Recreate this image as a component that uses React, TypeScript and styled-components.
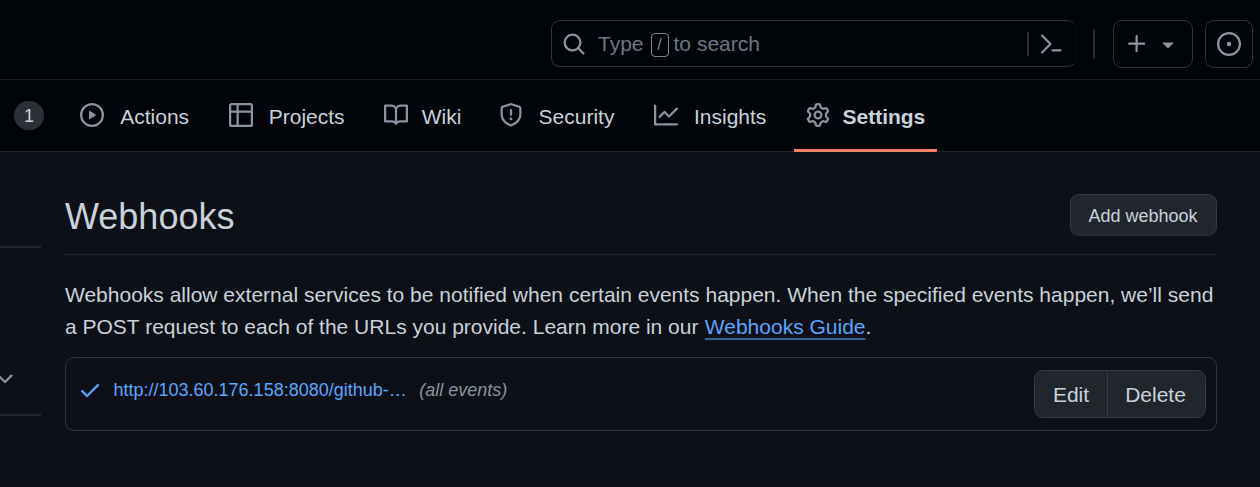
import React from "react";
import styled, { createGlobalStyle } from "styled-components";

const GlobalStyle = createGlobalStyle`
  * { box-sizing: border-box; }
  body {
    margin: 0;
    background: #0d1117;
    color: #c9d1d9;
    font-family: "Liberation Sans", Arial, sans-serif;
    font-size: 21px;
    line-height: 1.5;
    overflow: hidden;
  }
`;

const icons = {
  search:
    "M10.68 11.74a6 6 0 0 1-7.922-8.982 6 6 0 0 1 8.982 7.922l3.04 3.04a.749.749 0 0 1-.326 1.275.749.749 0 0 1-.734-.215ZM11.5 7a4.499 4.499 0 1 0-8.997 0A4.499 4.499 0 0 0 11.5 7Z",
  plus: "M7.75 2a.75.75 0 0 1 .75.75V7h4.25a.75.75 0 0 1 0 1.5H8.5v4.25a.75.75 0 0 1-1.5 0V8.5H2.75a.75.75 0 0 1 0-1.5H7V2.75A.75.75 0 0 1 7.75 2Z",
  caret:
    "m4.427 7.427 3.396 3.396a.25.25 0 0 0 .354 0l3.396-3.396A.25.25 0 0 0 11.396 7H4.604a.25.25 0 0 0-.177.427Z",
  issue:
    "M8 9.5a1.5 1.5 0 1 0 0-3 1.5 1.5 0 0 0 0 3ZM8 0a8 8 0 1 1 0 16A8 8 0 0 1 8 0ZM1.5 8a6.5 6.5 0 1 0 13 0 6.5 6.5 0 0 0-13 0Z",
  play: "M8 0a8 8 0 1 1 0 16A8 8 0 0 1 8 0ZM1.5 8a6.5 6.5 0 1 0 13 0 6.5 6.5 0 0 0-13 0Zm4.879-2.773 4.264 2.559a.25.25 0 0 1 0 .428l-4.264 2.559A.25.25 0 0 1 6 10.559V5.442a.25.25 0 0 1 .379-.215Z",
  table:
    "M0 1.75C0 .784.784 0 1.75 0h12.5C15.216 0 16 .784 16 1.75v12.5A1.75 1.75 0 0 1 14.25 16H1.75A1.75 1.75 0 0 1 0 14.25ZM6.5 6.5v8h7.75a.25.25 0 0 0 .25-.25V6.5Zm8-1.5V1.75a.25.25 0 0 0-.25-.25H6.5V5Zm-13 1.5v7.75c0 .138.112.25.25.25H5v-8ZM5 5V1.5H1.75a.25.25 0 0 0-.25.25V5Z",
  book: "M0 1.75A.75.75 0 0 1 .75 1h4.253c1.227 0 2.317.59 3 1.501A3.743 3.743 0 0 1 11.006 1h4.245a.75.75 0 0 1 .75.75v10.5a.75.75 0 0 1-.75.75h-4.507a2.25 2.25 0 0 0-1.591.659l-.622.621a.75.75 0 0 1-1.06 0l-.622-.621A2.25 2.25 0 0 0 5.258 13H.75a.75.75 0 0 1-.75-.75Zm7.251 10.324.004-5.073-.002-2.253A2.25 2.25 0 0 0 5.003 2.5H1.5v9h3.757a3.75 3.75 0 0 1 1.994.574ZM8.755 4.75l-.004 7.322a3.752 3.752 0 0 1 1.992-.572H14.5v-9h-3.495a2.25 2.25 0 0 0-2.25 2.25Z",
  shield:
    "M7.467.133a1.748 1.748 0 0 1 1.066 0l5.25 1.68A1.75 1.75 0 0 1 15 3.48V7c0 1.566-.32 3.182-1.303 4.682-.983 1.498-2.585 2.813-5.032 3.855a1.697 1.697 0 0 1-1.33 0c-2.447-1.042-4.049-2.357-5.032-3.855C1.32 10.182 1 8.566 1 7V3.48a1.75 1.75 0 0 1 1.217-1.667Zm.61 1.429a.25.25 0 0 0-.153 0l-5.25 1.68a.25.25 0 0 0-.174.238V7c0 1.358.275 2.666 1.057 3.86.784 1.194 2.121 2.34 4.366 3.297a.196.196 0 0 0 .154 0c2.245-.956 3.582-2.104 4.366-3.298C13.225 9.666 13.5 8.36 13.5 7V3.48a.251.251 0 0 0-.174-.237l-5.25-1.68ZM8.75 4.75v3a.75.75 0 0 1-1.5 0v-3a.75.75 0 0 1 1.5 0ZM9 10.5a1 1 0 1 1-2 0 1 1 0 0 1 2 0Z",
  graph:
    "M1.5 1.75V13.5h13.75a.75.75 0 0 1 0 1.5H.75a.75.75 0 0 1-.75-.75V1.75a.75.75 0 0 1 1.5 0Zm14.28 2.53-5.25 5.25a.75.75 0 0 1-1.06 0L7 7.06 4.28 9.78a.751.751 0 0 1-1.042-.018.751.751 0 0 1-.018-1.042l3.25-3.25a.75.75 0 0 1 1.06 0L10 7.94l4.72-4.72a.751.751 0 0 1 1.042.018.751.751 0 0 1 .018 1.042Z",
  gear: "M8 0a8.2 8.2 0 0 1 .701.031C9.444.095 9.99.645 10.16 1.29l.288 1.107c.018.066.079.158.212.224.231.114.454.243.668.386.123.082.233.09.299.071l1.103-.303c.644-.176 1.392.021 1.82.63.27.385.506.792.704 1.218.315.675.111 1.422-.364 1.891l-.814.806c-.049.048-.098.147-.088.294.016.257.016.515 0 .772-.01.147.038.246.088.294l.814.806c.475.469.679 1.216.364 1.891a7.977 7.977 0 0 1-.704 1.217c-.428.61-1.176.807-1.82.63l-1.102-.302c-.067-.019-.177-.011-.3.071a5.909 5.909 0 0 1-.668.386c-.133.066-.194.158-.211.224l-.29 1.106c-.168.646-.715 1.196-1.458 1.26a8.006 8.006 0 0 1-1.402 0c-.743-.064-1.289-.614-1.458-1.26l-.289-1.106c-.018-.066-.079-.158-.212-.224a5.738 5.738 0 0 1-.668-.386c-.123-.082-.233-.09-.299-.071l-1.103.303c-.644.176-1.392-.021-1.82-.63a8.12 8.12 0 0 1-.704-1.218c-.315-.675-.111-1.422.363-1.891l.815-.806c.05-.048.098-.147.088-.294a6.214 6.214 0 0 1 0-.772c.01-.147-.038-.246-.088-.294l-.815-.806C.635 6.045.431 5.298.746 4.623a7.92 7.92 0 0 1 .704-1.217c.428-.61 1.176-.807 1.82-.63l1.102.302c.067.019.177.011.3-.071.214-.143.437-.272.668-.386.133-.066.194-.158.211-.224l.29-1.106C6.009.645 6.556.095 7.299.03 7.53.01 7.764 0 8 0Zm-.571 1.525c-.036.003-.108.036-.137.146l-.289 1.105c-.147.561-.549.967-.998 1.189-.173.086-.34.183-.5.29-.417.278-.97.423-1.529.27l-1.103-.303c-.109-.03-.175.016-.195.045-.22.312-.412.644-.573.99-.014.031-.021.11.059.19l.815.806c.411.406.562.957.53 1.456a4.709 4.709 0 0 0 0 .582c.032.499-.119 1.05-.53 1.456l-.815.806c-.081.08-.073.159-.059.19.162.346.353.677.573.989.02.03.085.076.195.046l1.102-.303c.56-.153 1.113-.008 1.53.27.161.107.328.204.501.29.447.222.85.629.997 1.189l.289 1.105c.029.109.101.143.137.146a6.6 6.6 0 0 0 1.142 0c.036-.003.108-.036.137-.146l.289-1.105c.147-.561.549-.967.998-1.189.173-.086.34-.183.5-.29.417-.278.97-.423 1.529-.27l1.103.303c.109.029.175-.016.195-.045.22-.313.411-.644.573-.99.014-.031.021-.11-.059-.19l-.815-.806c-.411-.406-.562-.957-.53-1.456a4.709 4.709 0 0 0 0-.582c-.032-.499.119-1.05.53-1.456l.815-.806c.081-.08.073-.159.059-.19a6.464 6.464 0 0 0-.573-.989c-.02-.03-.085-.076-.195-.046l-1.102.303c-.56.153-1.113.008-1.53-.27a4.44 4.44 0 0 0-.501-.29c-.447-.222-.85-.629-.997-1.189l-.289-1.105c-.029-.11-.101-.143-.137-.146a6.6 6.6 0 0 0-1.142 0ZM11 8a3 3 0 1 1-6 0 3 3 0 0 1 6 0ZM9.5 8a1.5 1.5 0 1 0-3.001.001A1.5 1.5 0 0 0 9.5 8Z",
  check:
    "M13.78 4.22a.75.75 0 0 1 0 1.06l-7.25 7.25a.75.75 0 0 1-1.06 0L2.22 9.28a.751.751 0 0 1 .018-1.042.751.751 0 0 1 1.042-.018L6 10.94l6.72-6.72a.75.75 0 0 1 1.06 0Z",
  chevron:
    "M12.78 5.22a.749.749 0 0 1 0 1.06l-4.25 4.25a.749.749 0 0 1-1.06 0L3.22 6.28a.749.749 0 1 1 1.06-1.06L8 8.939l3.72-3.719a.749.749 0 0 1 1.06 0Z",
};

type IconName = keyof typeof icons;

const IconSvg = styled.svg`
  display: block;
  flex: none;
  fill: currentColor;
`;

const Icon = ({ name, size = 24 }: { name: IconName; size?: number }) => (
  <IconSvg width={size} height={size} viewBox="0 0 16 16" aria-hidden="true">
    <path d={icons[name]} />
  </IconSvg>
);

const Page = styled.div`
  width: 1260px;
  height: 487px;
  overflow: hidden;
`;

const TopBar = styled.header`
  display: flex;
  justify-content: flex-end;
  align-items: flex-start;
  height: 80px;
  padding: 20px 7px 0 0;
  background: #010409;
  border-bottom: 1px solid #161b22;
  color: #8b949e;
`;

const SearchBox = styled.div`
  display: flex;
  align-items: center;
  width: 525px;
  height: 47px;
  padding: 0 13px 0 10px;
  border: 1px solid #30363d;
  border-right-color: #0c1016;
  border-radius: 9px;
`;

const SearchText = styled.div`
  display: flex;
  align-items: center;
  flex: 1;
  margin-left: 12px;
  color: #6e7681;
`;

const SlashKey = styled.span`
  width: 18px;
  height: 24px;
  margin: 3px 5px 0 7px;
  border: 1px solid #7d8590;
  border-radius: 4px;
  font-size: 16px;
  line-height: 21px;
  text-align: center;
  color: #7d8590;
`;

const Divider = styled.span<{ $height: number }>`
  flex: none;
  width: 2px;
  height: ${(p) => p.$height}px;
  background: #282d34;
`;

const TopDivider = styled(Divider)`
  margin: 9px 18px 0 17px;
`;

const PromptSvg = styled.svg`
  margin-left: 11px;
  fill: none;
  stroke: currentColor;
  stroke-width: 2.2;
  stroke-linecap: round;
  stroke-linejoin: round;
`;

const TopButton = styled.button<{ $width: number }>`
  display: flex;
  align-items: center;
  justify-content: center;
  gap: 7px;
  width: ${(p) => p.$width}px;
  height: 48px;
  margin: 0 0 0 ${(p) => (p.$width < 60 ? 12 : 0)}px;
  padding: 0 1px 1px 0;
  color: inherit;
  background: transparent;
  border: 1px solid #30363d;
  border-radius: 9px;
`;

const Tabs = styled.nav`
  display: flex;
  gap: 12px;
  height: 72px;
  padding-left: 14px;
  background: #010409;
  border-bottom: 1px solid #21262d;
`;

const Counter = styled.span`
  width: 30px;
  height: 29px;
  margin: 21px 12.2px 0 0;
  border-radius: 15px;
  background: #2b3037;
  font-size: 18px;
  line-height: 31px;
  text-align: center;
`;

const Tab = styled.a<{ $active?: boolean }>`
  display: flex;
  align-items: center;
  gap: 12px;
  height: 72px;
  padding: 1px 12px 0;
  border-bottom: 3px solid ${(p) => (p.$active ? "#f78166" : "transparent")};
  border-radius: 1px;
  color: #8b949e;
`;

/* The bold copy reserves the width a tab takes when selected. */
const TabLabel = styled.span<{ $active?: boolean }>`
  margin-top: 3px;
  text-align: center;
  color: #c9d1d9;
  font-weight: ${(p) => (p.$active ? 700 : 400)};

  &::before {
    content: attr(data-label);
    display: block;
    height: 0;
    visibility: hidden;
    font-weight: 700;
  }
`;

const Body = styled.div`
  display: flex;
  gap: 24px;
`;

const Sidebar = styled.aside`
  display: flex;
  flex-direction: column;
  width: 41px;
  padding-top: 94px;
  color: #8b949e;
`;

const SideSection = styled.div`
  display: flex;
  align-items: flex-end;
  height: 170px;
  padding-bottom: 23px;
  border-top: 2px solid #21262d;
  border-bottom: 2px solid #21262d;

  svg {
    margin-left: -7px;
  }
`;

const Main = styled.main`
  width: 1152px;
`;

const Subhead = styled.div`
  display: flex;
  justify-content: space-between;
  height: 103px;
  padding-top: 42px;
  border-bottom: 1px solid #21262d;
`;

const Title = styled.h2`
  margin: -4px 0 0;
  font-size: 36px;
  font-weight: 400;
  line-height: 54px;
`;

const AddButton = styled.button`
  width: 147px;
  height: 42px;
  padding: 2px 1px 0 0;
  font: 18px "Liberation Sans", Arial, sans-serif;
  color: #c9d1d9;
  background: #21262d;
  border: 1px solid #363b42;
  border-bottom-color: #2b3037;
  border-radius: 9px;
`;

const Intro = styled.p`
  margin: 24px 0 14px;
  line-height: 32px;
  white-space: nowrap;
`;

const GuideLink = styled.a`
  margin-left: 0.5px;
  color: #58a6ff;
  text-decoration: underline #376296 2px;
  text-underline-offset: 4px;
  text-decoration-skip-ink: none;
`;

const HookRow = styled.div`
  display: flex;
  align-items: flex-start;
  height: 74px;
  padding: 12px 10px 0 11.5px;
  border: 1px solid #30363d;
  border-radius: 9px;
  font-size: 18px;
  line-height: 27px;
  color: #58a6ff;

  > svg {
    margin-top: 8px;
  }
`;

const HookUrl = styled.a`
  margin: 7px 0 0 12px;
`;

const HookEvents = styled.em`
  flex: 1;
  margin: 7px 0 0 12.5px;
  color: #8b949e;
`;

const ButtonGroup = styled.div`
  display: flex;
  height: 48px;
  overflow: hidden;
  background: #21262d;
  border: 1px solid #363b42;
  border-radius: 9px;
`;

const GroupButton = styled.button<{ $width: number }>`
  width: ${(p) => p.$width}px;
  padding: 1px 0 0;
  font: 21px "Liberation Sans", Arial, sans-serif;
  color: #c9d1d9;
  background: transparent;
  border: 0;

  & + & {
    padding-right: 2px;
    border-left: 1px solid #363b42;
  }
`;

const tabs: { icon: IconName; label: string; active?: boolean }[] = [
  { icon: "play", label: "Actions" },
  { icon: "table", label: "Projects" },
  { icon: "book", label: "Wiki" },
  { icon: "shield", label: "Security" },
  { icon: "graph", label: "Insights" },
  { icon: "gear", label: "Settings", active: true },
];

export default function App() {
  return (
    <Page>
      <GlobalStyle />
      <TopBar>
        <SearchBox>
          <Icon name="search" />
          <SearchText>
            Type <SlashKey>/</SlashKey> to search
          </SearchText>
          <Divider $height={24} />
          <PromptSvg width="22" height="20" viewBox="0 0 22 20">
            <path d="M2 1.5 10.5 10 2 18.5M12.5 16.3h8" />
          </PromptSvg>
        </SearchBox>
        <TopDivider $height={30} />
        <TopButton $width={80}>
          <Icon name="plus" />
          <Icon name="caret" />
        </TopButton>
        <TopButton $width={48}>
          <Icon name="issue" />
        </TopButton>
      </TopBar>
      <Tabs>
        <Counter>1</Counter>
        {tabs.map((t) => (
          <Tab key={t.label} $active={t.active}>
            <Icon name={t.icon} />
            <TabLabel data-label={t.label} $active={t.active}>
              {t.label}
            </TabLabel>
          </Tab>
        ))}
      </Tabs>
      <Body>
        <Sidebar>
          <SideSection>
            <Icon name="chevron" />
          </SideSection>
        </Sidebar>
        <Main>
          <Subhead>
            <Title>Webhooks</Title>
            <AddButton>Add webhook</AddButton>
          </Subhead>
          <Intro>
            Webhooks allow external services to be notified when certain events happen. When the specified events happen, we’ll send
            <br />a POST request to each of the URLs you provide. Learn more in our <GuideLink>Webhooks Guide</GuideLink>.
          </Intro>
          <HookRow>
            <Icon name="check" />
            <HookUrl>http://103.60.176.158:8080/github-…</HookUrl>
            <HookEvents>(all events)</HookEvents>
            <ButtonGroup>
              <GroupButton $width={72}>Edit</GroupButton>
              <GroupButton $width={98}>Delete</GroupButton>
            </ButtonGroup>
          </HookRow>
        </Main>
      </Body>
    </Page>
  );
}
